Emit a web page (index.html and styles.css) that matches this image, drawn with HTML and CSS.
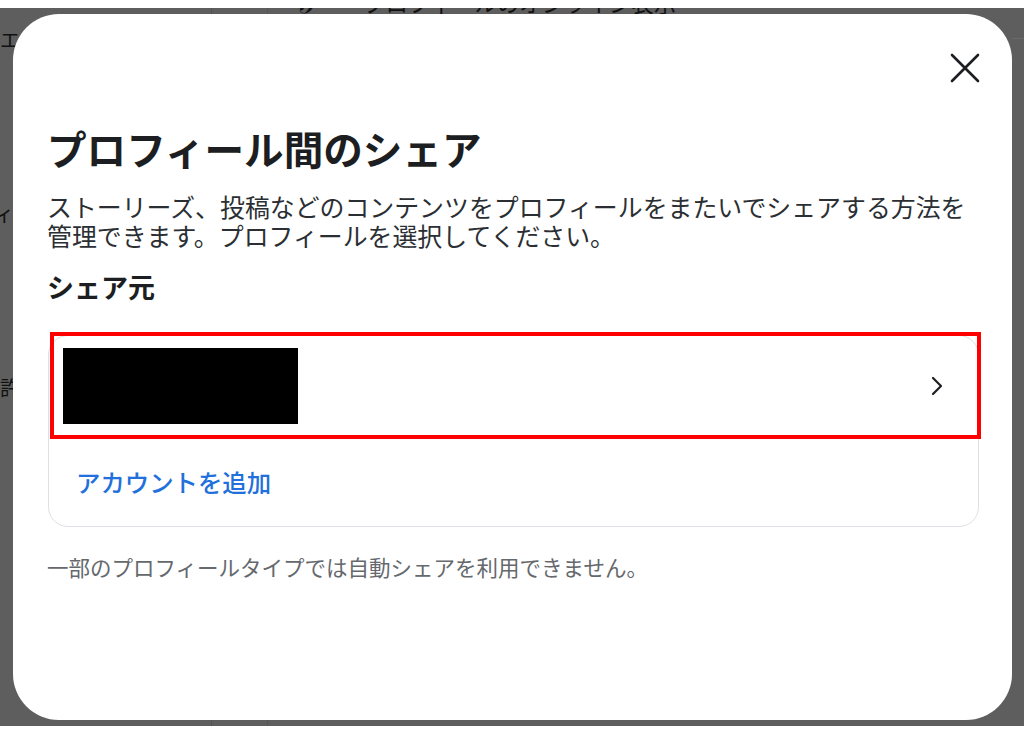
FILE: index.html
```html
<!DOCTYPE html>
<html lang="ja">
<head>
<meta charset="utf-8">
<title>プロフィール間のシェア</title>
<link rel="stylesheet" href="styles.css">
</head>
<body>
<div class="stage">
  <div class="page">
    <div class="side">
      <div class="side-item side-item-1">エ</div>
      <div class="side-item side-item-2">ィ</div>
      <div class="side-item side-item-3">許</div>
    </div>
    <div class="gutter"></div>
    <div class="main">
      <div class="main-item">
        <span class="main-icon">ℐ</span>
        <span>プロフィールのオンライン表示</span>
      </div>
      <div class="main-rule"></div>
    </div>
  </div>

  <div class="modal" role="dialog" aria-labelledby="ttl">
    <div class="modal-head">
      <button class="close" aria-label="閉じる">
        <svg width="40" height="40" viewBox="0 0 40 40"><path d="M7 7 L33 33 M33 7 L7 33" stroke="#1c1e21" stroke-width="2.6" stroke-linecap="round" fill="none"/></svg>
      </button>
    </div>
    <h1 class="title" id="ttl">プロフィール間のシェア</h1>
    <p class="desc">ストーリーズ、投稿などのコンテンツをプロフィールをまたいでシェアする方法を<br>管理できます。プロフィールを選択してください。</p>
    <h2 class="section">シェア元</h2>
    <div class="card">
      <div class="row row-profile">
        <div class="redact"></div>
        <svg class="chev" width="24" height="24" viewBox="0 0 24 24"><polyline points="8,4 16,12 8,20" fill="none" stroke="#1c1e21" stroke-width="2.2" stroke-linecap="round" stroke-linejoin="round"/></svg>
        <div class="mark"></div>
      </div>
      <div class="row row-add">
        <a class="add" href="#">アカウントを追加</a>
      </div>
    </div>
    <p class="note">一部のプロフィールタイプでは自動シェアを利用できません。</p>
  </div>
</div>
</body>
</html>
```

FILE: styles.css
```css
* { box-sizing: border-box; }

html, body {
  margin: 0;
  padding: 0;
  background: #ffffff;
  font-family: "Noto Sans CJK JP", "Noto Sans", sans-serif;
}

.stage {
  position: relative;
  margin-top: 8px;
  width: 1024px;
  height: 718px;
  background: #5e5e5e;
  overflow: hidden;
}

/* dimmed page behind the dialog */
.page {
  display: grid;
  grid-template-columns: 212px 56px 1fr;
  height: 100%;
  color: #111;
}

.side {
  border-right: 1px solid #535353;
  padding-top: 18px;
  font-size: 20px;
  white-space: nowrap;
  overflow: hidden;
}

.side-item { line-height: 28px; }
.side-item-2 { margin-top: 146px; margin-left: -6px; }
.side-item-3 { margin-top: 146px; }

.gutter { border-right: 1px solid #565656; }

.main {
  display: flex;
  flex-direction: column;
}

.main-item {
  display: flex;
  align-items: center;
  gap: 38px;
  margin-top: -22px;
  padding-left: 32px;
  font-size: 22.4px;
  line-height: 32px;
  white-space: nowrap;
}

.main-icon { font-size: 26px; width: 25px; }

.main-rule {
  margin-top: 20px;
  margin-left: 744px;
  border-top: 1px solid #6a6a6a;
}

/* dialog */
.modal {
  position: absolute;
  left: 13px;
  top: 6px;
  width: 999px;
  height: 706px;
  background: #ffffff;
  border-radius: 46px;
  padding: 34px 33px 0 34px;
  display: flex;
  flex-direction: column;
}

.modal-head {
  display: flex;
  justify-content: flex-end;
  height: 40px;
}

.close {
  width: 40px;
  height: 40px;
  margin-right: -6px;
  padding: 0;
  border: 0;
  background: none;
  display: flex;
  align-items: center;
  justify-content: center;
}

.title {
  margin: 36px 0 0;
  font-size: 39.6px;
  line-height: 47px;
  font-weight: 700;
  color: #1c1e21;
}

.desc {
  margin: 21px 0 0;
  font-size: 24.9px;
  line-height: 28.5px;
  color: #2b2f33;
}

.section {
  margin: 21px 0 0;
  font-size: 27px;
  line-height: 34px;
  font-weight: 700;
  color: #1c1e21;
}

.card {
  position: relative;
  margin-top: 31px;
  margin-left: 1px;
  border: 1px solid #dde0e4;
  border-radius: 20px;
}

.row {
  display: flex;
  align-items: center;
}

.row-profile {
  height: 101px;
  padding: 0 29px 2px 14px;
  justify-content: space-between;
}

.redact {
  width: 235px;
  height: 76px;
  background: #000000;
}

.chev { display: block; }

.mark {
  position: absolute;
  left: 1px;
  top: -4px;
  width: 931px;
  height: 107px;
  border: 4px solid #ff0000;
}

.row-add {
  height: 89px;
  padding-left: 27px;
}

.add {
  font-size: 24.4px;
  line-height: 32px;
  font-weight: 500;
  color: #2170db;
  text-decoration: none;
}

.note {
  margin: 26px 0 0;
  font-size: 21.5px;
  line-height: 28px;
  color: #65686c;
}
```
